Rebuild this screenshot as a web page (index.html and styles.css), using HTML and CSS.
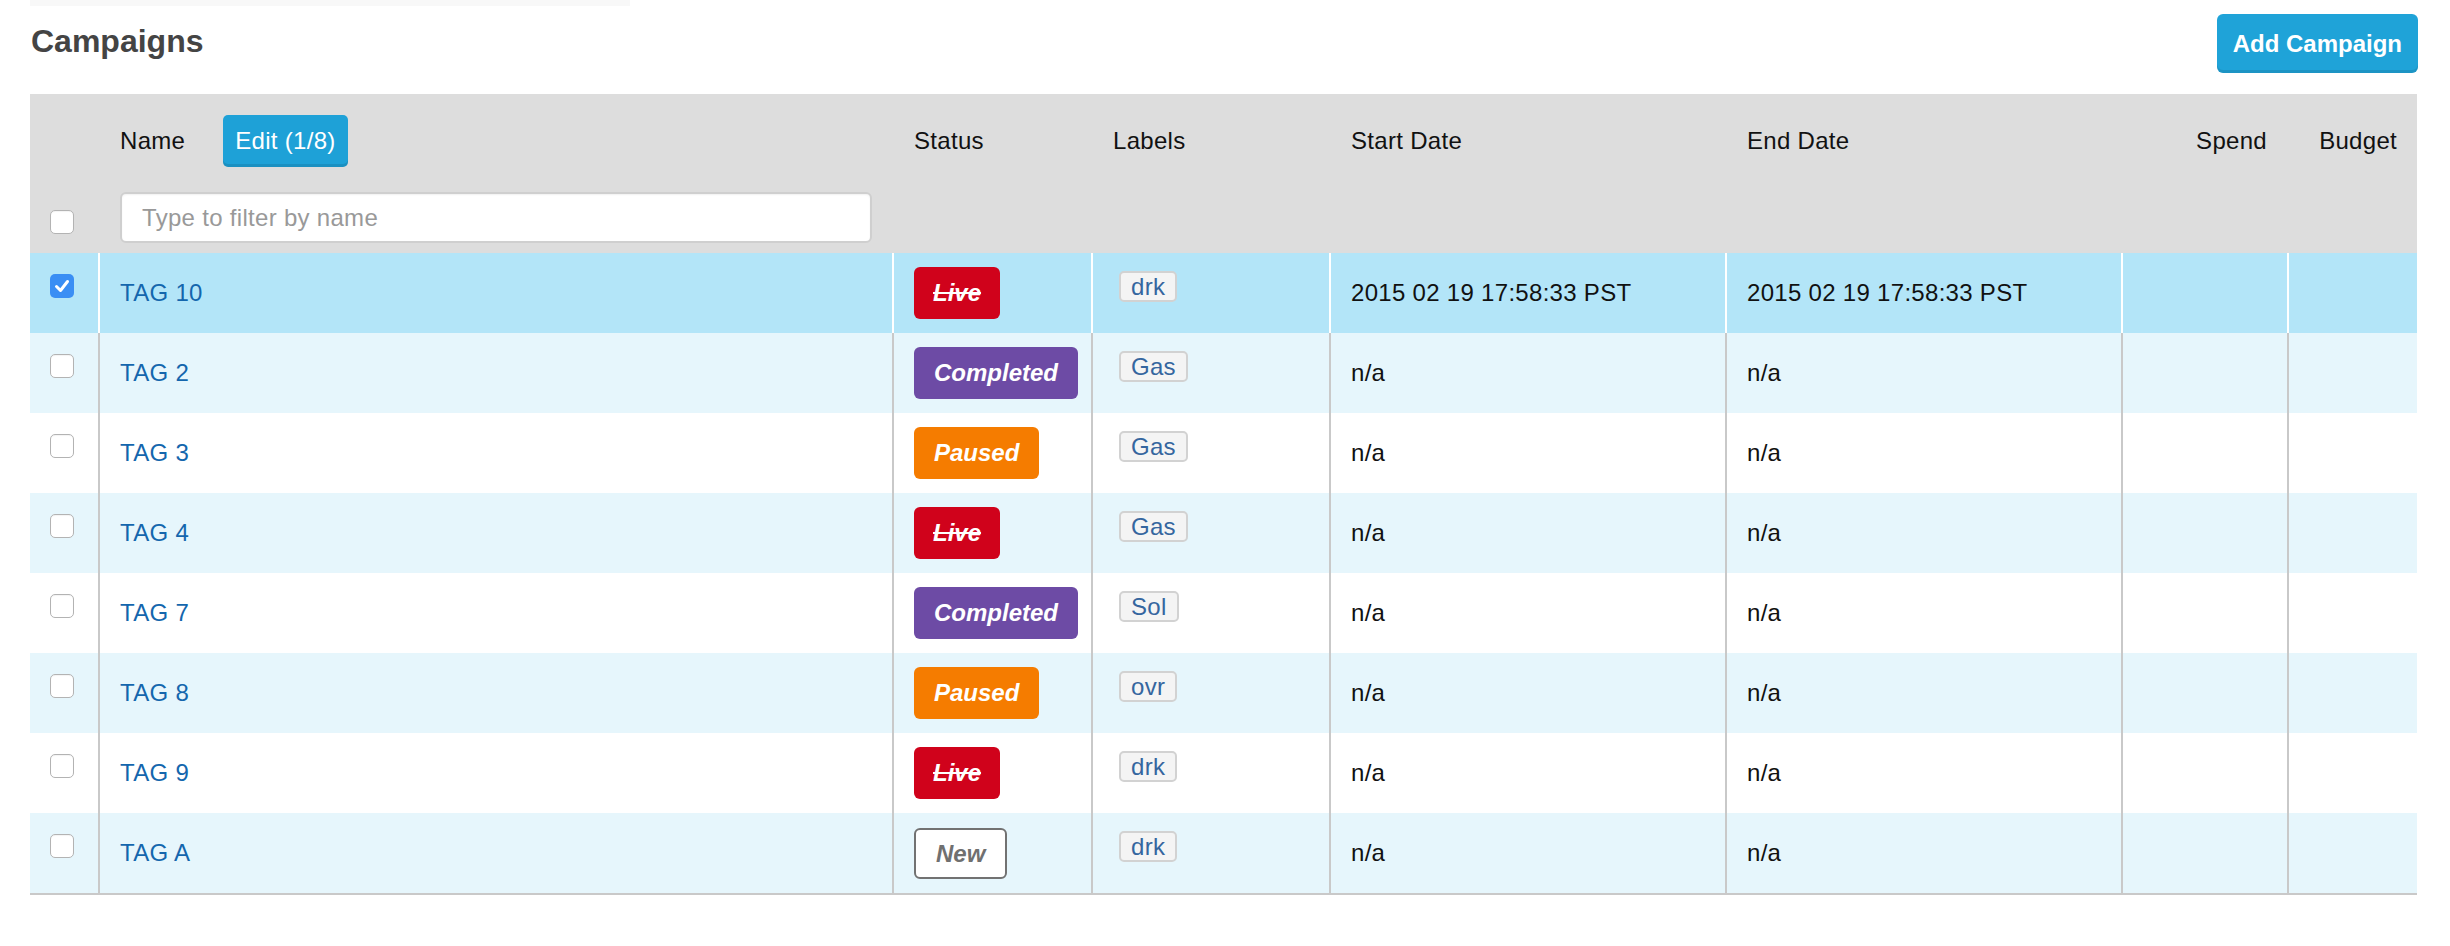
FILE: index.html
```html
<!DOCTYPE html>
<html>
<head>
<meta charset="utf-8">
<title>Campaigns</title>
<link rel="stylesheet" href="styles.css">
</head>
<body>
<div class="page">
  <div class="topline"></div>
  <div class="page-header">
    <h1 class="title">Campaigns</h1>
    <button class="btn-add">Add Campaign</button>
  </div>
  <table class="grid">
    <colgroup>
      <col class="c-check"><col class="c-name"><col class="c-status"><col class="c-labels">
      <col class="c-date"><col class="c-date"><col class="c-spend"><col class="c-budget">
    </colgroup>
    <thead>
      <tr class="head-top">
        <th></th>
        <th class="name-head"><span class="head-label">Name</span><button class="btn-edit">Edit (1/8)</button></th>
        <th>Status</th>
        <th>Labels</th>
        <th>Start Date</th>
        <th>End Date</th>
        <th class="num">Spend</th>
        <th class="num">Budget</th>
      </tr>
      <tr class="head-filter">
        <th class="cb-cell"><span class="cb"></span></th>
        <th class="filter-cell"><input class="filter" type="text" placeholder="Type to filter by name"></th>
        <th colspan="6"></th>
      </tr>
    </thead>
    <tbody>
      <tr class="selected">
        <td class="cb-cell"><span class="cb checked"><svg viewBox="0 0 24 24" width="24" height="24"><path d="M6.5 12.5 L10.5 16.5 L17.5 7.5" fill="none" stroke="#fff" stroke-width="3" stroke-linecap="round" stroke-linejoin="round"/></svg></span></td>
        <td><a class="link">TAG 10</a></td>
        <td><span class="badge live">Live</span></td>
        <td class="tag-cell"><span class="tag">drk</span></td>
        <td>2015 02 19 17:58:33 PST</td>
        <td>2015 02 19 17:58:33 PST</td>
        <td></td>
        <td></td>
      </tr>
      <tr>
        <td class="cb-cell"><span class="cb"></span></td>
        <td><a class="link">TAG 2</a></td>
        <td><span class="badge completed">Completed</span></td>
        <td class="tag-cell"><span class="tag">Gas</span></td>
        <td>n/a</td><td>n/a</td><td></td><td></td>
      </tr>
      <tr>
        <td class="cb-cell"><span class="cb"></span></td>
        <td><a class="link">TAG 3</a></td>
        <td><span class="badge paused">Paused</span></td>
        <td class="tag-cell"><span class="tag">Gas</span></td>
        <td>n/a</td><td>n/a</td><td></td><td></td>
      </tr>
      <tr>
        <td class="cb-cell"><span class="cb"></span></td>
        <td><a class="link">TAG 4</a></td>
        <td><span class="badge live">Live</span></td>
        <td class="tag-cell"><span class="tag">Gas</span></td>
        <td>n/a</td><td>n/a</td><td></td><td></td>
      </tr>
      <tr>
        <td class="cb-cell"><span class="cb"></span></td>
        <td><a class="link">TAG 7</a></td>
        <td><span class="badge completed">Completed</span></td>
        <td class="tag-cell"><span class="tag">Sol</span></td>
        <td>n/a</td><td>n/a</td><td></td><td></td>
      </tr>
      <tr>
        <td class="cb-cell"><span class="cb"></span></td>
        <td><a class="link">TAG 8</a></td>
        <td><span class="badge paused">Paused</span></td>
        <td class="tag-cell"><span class="tag">ovr</span></td>
        <td>n/a</td><td>n/a</td><td></td><td></td>
      </tr>
      <tr>
        <td class="cb-cell"><span class="cb"></span></td>
        <td><a class="link">TAG 9</a></td>
        <td><span class="badge live">Live</span></td>
        <td class="tag-cell"><span class="tag">drk</span></td>
        <td>n/a</td><td>n/a</td><td></td><td></td>
      </tr>
      <tr>
        <td class="cb-cell"><span class="cb"></span></td>
        <td><a class="link">TAG A</a></td>
        <td><span class="badge new">New</span></td>
        <td class="tag-cell"><span class="tag">drk</span></td>
        <td>n/a</td><td>n/a</td><td></td><td></td>
      </tr>
    </tbody>
  </table>
</div>
</body>
</html>
```

FILE: styles.css
```css
* { box-sizing: border-box; }

html, body {
  margin: 0;
  padding: 0;
  background: #fff;
}

body {
  font-family: "Liberation Sans", Arial, Helvetica, sans-serif;
  font-size: 24px;
  color: #111;
  letter-spacing: 0.3px;
}

.page {
  padding: 0 33px 0 30px;
}

.topline {
  width: 600px;
  height: 6px;
  background: #f8f8f8;
}

.page-header {
  display: flex;
  justify-content: space-between;
  align-items: flex-start;
  height: 88px;
}

.title {
  margin: 17px 0 0 1px;
  font-size: 32px;
  line-height: 36px;
  font-weight: bold;
  color: #444;
  letter-spacing: 0;
}

.btn-add {
  margin-top: 8px;
  margin-right: -1px;
  height: 59px;
  padding: 0 16px;
  border: 0;
  border-radius: 6px;
  background: #1fa3d8;
  box-shadow: inset 0 -3px 0 rgba(0, 0, 0, 0.09);
  color: #fff;
  font-family: inherit;
  font-size: 24px;
  font-weight: bold;
  letter-spacing: 0;
}

.grid {
  width: 2387px;
  border-collapse: separate;
  border-spacing: 0;
  table-layout: fixed;
  border-bottom: 2px solid #c9c9c9;
}

.c-check { width: 68px; }
.c-name { width: 794px; }
.c-status { width: 199px; }
.c-labels { width: 238px; }
.c-date { width: 396px; }
.c-spend { width: 166px; }
.c-budget { width: 130px; }

.grid th,
.grid td {
  padding: 0 20px;
  text-align: left;
  white-space: nowrap;
}

.grid th {
  background: #dddddd;
  font-weight: normal;
  border-left: 2px solid transparent;
}

.grid th:first-child,
.grid td:first-child {
  border-left: 0;
}

.head-top th {
  height: 94px;
  vertical-align: middle;
}

.grid th.num {
  text-align: right;
}

.head-label {
  display: inline-block;
  vertical-align: middle;
  margin-right: 38px;
}

.btn-edit {
  display: inline-block;
  vertical-align: middle;
  height: 52px;
  padding: 0 12px;
  border: 0;
  border-radius: 5px;
  background: #1ea1d7;
  box-shadow: inset 0 -3px 0 rgba(0, 0, 0, 0.1);
  color: #fff;
  font-family: inherit;
  font-size: 24px;
  letter-spacing: 0.3px;
}

.head-filter th {
  height: 65px;
  vertical-align: top;
}

.head-filter th.cb-cell {
  padding-top: 22px;
}

.head-filter th.filter-cell {
  padding-top: 4px;
}

.filter {
  display: block;
  width: 752px;
  height: 51px;
  border: 2px solid #cfcfcf;
  border-radius: 6px;
  padding: 0 0 0 20px;
  background: #fff;
  box-shadow: inset 0 1px 2px rgba(0, 0, 0, 0.06);
  font-family: inherit;
  font-size: 24px;
  letter-spacing: 0.3px;
  color: #333;
  outline: none;
}

.filter::placeholder {
  color: #999;
}

.grid td {
  height: 80px;
  vertical-align: middle;
  border-left: 2px solid #c9c9c9;
}

.grid tbody tr:nth-child(even) td {
  background: #e6f6fc;
}

.grid tbody tr.selected td {
  background: #b3e5f8;
  border-left-color: #ffffff;
}

.grid td.cb-cell {
  vertical-align: top;
  padding-top: 21px;
}

.cb {
  display: block;
  width: 24px;
  height: 24px;
  border: 1.5px solid #b3b3b3;
  border-radius: 5px;
  background: #fff;
  box-shadow: inset 0 1px 1px rgba(0, 0, 0, 0.05);
}

.cb.checked {
  border: 0;
  background: #3a8ef4;
  box-shadow: none;
}

.cb svg {
  display: block;
}

.link {
  color: #1466ad;
  text-decoration: none;
}

.badge {
  display: inline-block;
  height: 52px;
  line-height: 52px;
  padding: 0 20px;
  border-radius: 6px;
  color: #fff;
  font-weight: bold;
  font-style: italic;
  letter-spacing: 0;
}

.badge.live {
  background: #d0021b;
  text-decoration: line-through;
  padding: 0 19px;
}

.badge.completed {
  background: #6d4ba5;
}

.badge.paused {
  background: #f57c00;
}

.badge.new {
  height: 51px;
  line-height: 47px;
  background: #fff;
  border: 2px solid #727272;
  color: #707070;
}

.grid td.tag-cell {
  vertical-align: top;
  padding-top: 18px;
}

.tag {
  display: inline-block;
  margin-left: 6px;
  height: 31px;
  line-height: 27px;
  padding: 0 10px;
  border: 2px solid #d2d2d2;
  border-radius: 5px;
  background: #f4f4f4;
  color: #35669f;
}
```
